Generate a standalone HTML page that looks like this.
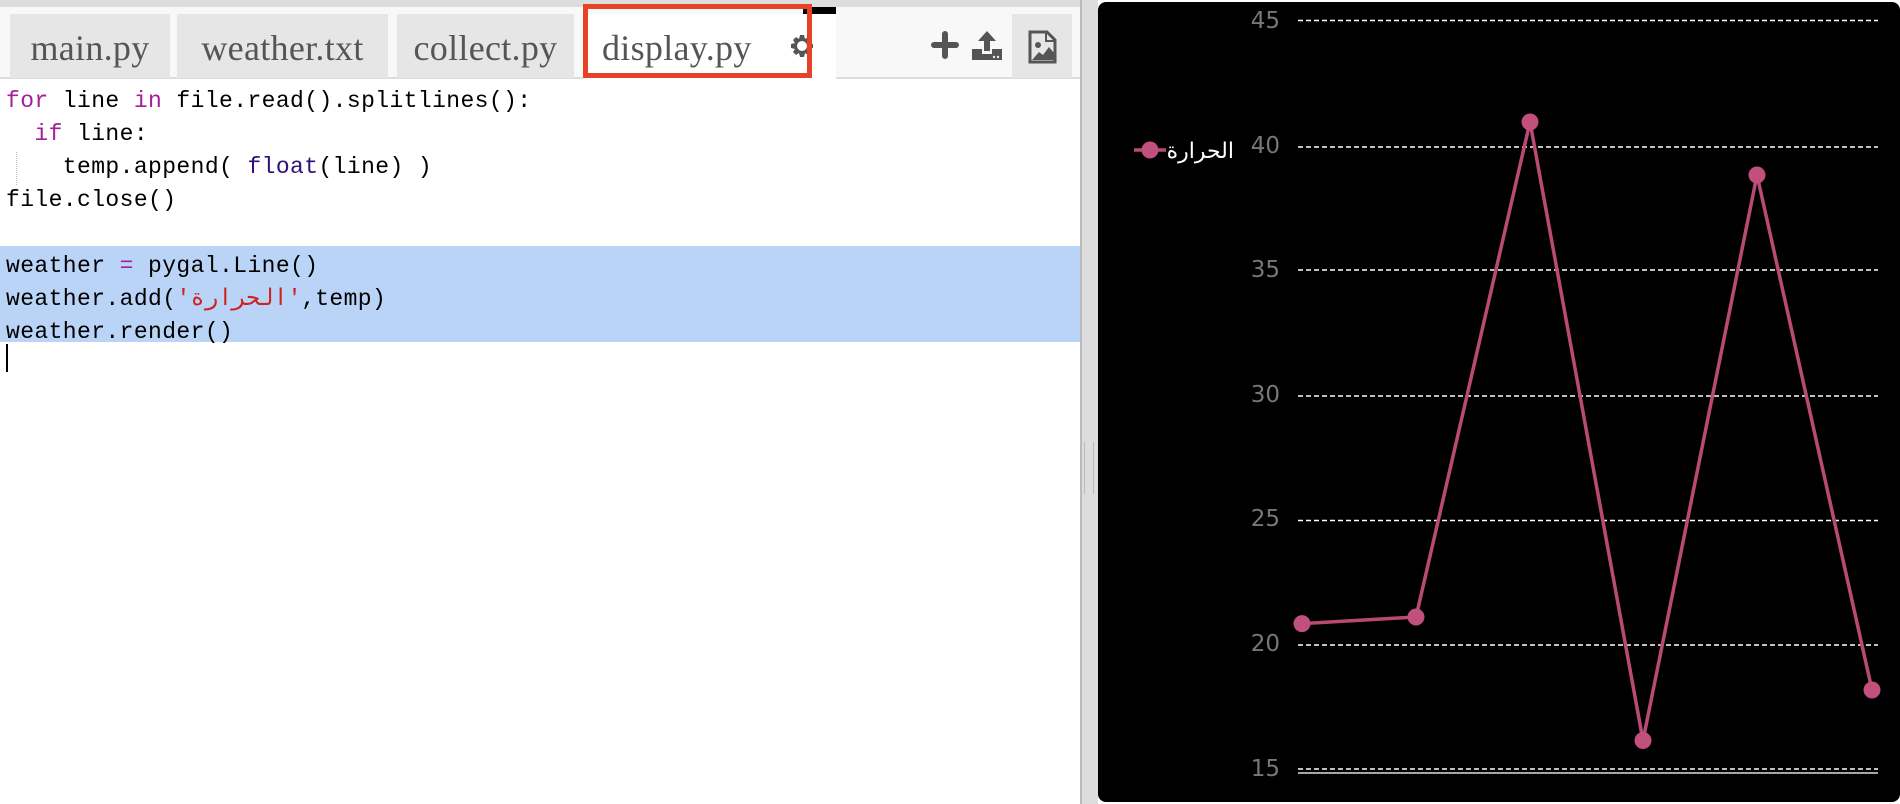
<!DOCTYPE html>
<html><head><meta charset="utf-8"><style>
body{margin:0;width:1900px;height:804px;overflow:hidden;background:#fff;position:relative;font-family:"Liberation Sans",sans-serif}
.abs{position:absolute}
.tab{position:absolute;top:14px;height:64px;background:#e6e6e6;font-family:"Liberation Serif",serif;font-size:36px;color:#555;line-height:68px;text-align:center;white-space:nowrap;letter-spacing:0.3px}
.code{position:absolute;left:6px;font-family:"Liberation Mono","Noto Sans CJK SC",monospace;font-size:23px;letter-spacing:0.4px;color:#000;white-space:pre;line-height:33px}
.k{color:#a31f9c}.b{color:#30107a}.s{color:#c22}
.lab{position:absolute;left:1220px;width:60px;text-align:right;font-family:"DejaVu Sans",sans-serif;font-size:23px;color:#777}
</style></head><body>
<div class="abs" style="left:0;top:0;width:1080px;height:7px;background:#ddd"></div>
<div class="abs" style="left:0;top:7px;width:1080px;height:71px;background:#f8f8f8"></div>
<div class="abs" style="left:0;top:77px;width:1080px;height:2px;background:#ddd"></div>
<div class="tab" style="left:10px;width:160px">main.py</div>
<div class="tab" style="left:177px;width:211px">weather.txt</div>
<div class="tab" style="left:397px;width:177px">collect.py</div>
<div class="abs" style="left:803px;top:7px;width:33px;height:8px;background:#000"></div>
<div class="abs" style="left:583px;top:14px;width:253px;height:66px;background:#fff"></div>
<div class="tab" style="left:602px;width:180px;background:#fff;text-align:left">display.py</div>
<svg class="abs" style="left:790px;top:32px" width="24" height="28" viewBox="0 0 24 24"><path fill="#555" d="M12 7a5 5 0 1 0 0 10a5 5 0 1 0 0-10zM10 1h4l1 4l3-2l3 3l-2 3l4 1v4l-4 1l2 3l-3 3l-3-2l-1 4h-4l-1-4l-3 2l-3-3l2-3l-4-1v-4l4-1l-2-3l3-3l3 2z"/></svg>
<div class="abs" style="left:583px;top:4px;width:229px;height:74px;border:5px solid #e8412a;box-sizing:border-box"></div>
<svg class="abs" style="left:930px;top:30px" width="30" height="30"><path d="M15 4v22M4 15h22" stroke="#555" stroke-width="6" stroke-linecap="round"/></svg>
<svg class="abs" style="left:970px;top:30px" width="34" height="32"><path fill="#555" d="M17 1l9 10h-6v10h-6v-10h-6z"/><path fill="#555" d="M2 19h10v5h10v-5h10v11h-30z"/><circle cx="24" cy="27" r="1.2" fill="#eee"/><circle cx="28" cy="27" r="1.2" fill="#eee"/></svg>
<div class="abs" style="left:1012px;top:14px;width:60px;height:64px;background:#e6e6e6"></div>
<svg class="abs" style="left:1028px;top:30px" width="30" height="34"><path d="M2 2h17l8 8v22h-25z" fill="none" stroke="#555" stroke-width="3"/><path d="M18 2v9h9" fill="none" stroke="#555" stroke-width="2"/><circle cx="10" cy="15" r="3" fill="#555"/><path d="M4 30l7-8l4 3l6-8l5 6v7z" fill="#555"/></svg>
<div class="abs" style="left:0;top:246px;width:1080px;height:96px;background:#bad4f8"></div>
<div class="abs" style="left:16px;top:152px;width:0;height:33px;border-left:1px dotted #bbb"></div>
<div class="code" style="top:85px"><span class="k">for</span> line <span class="k">in</span> file.read().splitlines():
  <span class="k">if</span> line:
    temp.append( <span class="b">float</span>(line) )
file.close()

weather <span class="k">=</span> pygal.Line()
weather.add(<span class="s">'الحرارة'</span>,temp)
weather.render()</div>
<div class="abs" style="left:6px;top:344px;width:2px;height:28px;background:#000"></div>
<div class="abs" style="left:1080px;top:0;width:18px;height:804px;background:#ddd;border-left:2px solid #bbb;box-sizing:border-box"></div>
<div class="abs" style="left:1084px;top:442px;width:8px;height:52px;border-left:1px solid #bbb;border-right:1px solid #bbb"></div>
<div class="abs" style="left:1098px;top:2px;width:802px;height:800px;background:#000;border-radius:8px"></div>
<div class="lab" style="top:8px">45</div><div class="lab" style="top:133px">40</div><div class="lab" style="top:257px">35</div><div class="lab" style="top:382px">30</div><div class="lab" style="top:506px">25</div><div class="lab" style="top:631px">20</div><div class="lab" style="top:756px">15</div>
<svg class="abs" style="left:0;top:0" width="1900" height="804">
<g stroke="#fff" stroke-width="1.5" stroke-dasharray="5,3">
<line x1="1298" x2="1878" y1="20.5" y2="20.5"/><line x1="1298" x2="1878" y1="147" y2="147"/><line x1="1298" x2="1878" y1="270" y2="270"/><line x1="1298" x2="1878" y1="396" y2="396"/><line x1="1298" x2="1878" y1="520.5" y2="520.5"/><line x1="1298" x2="1878" y1="645" y2="645"/><line x1="1298" x2="1878" y1="769" y2="769"/></g>
<line x1="1298" x2="1878" y1="773" y2="773" stroke="#ddd" stroke-width="1.5"/>
<polyline points="1302,623.6 1416,617 1530,122 1643,740.5 1757,175 1872,690" fill="none" stroke="#b94a73" stroke-width="3.5"/>
<g fill="#c2507c"><circle cx="1302" cy="623.6" r="8.5"/><circle cx="1416" cy="617" r="8.5"/><circle cx="1530" cy="122" r="8.5"/><circle cx="1643" cy="740.5" r="8.5"/><circle cx="1757" cy="175" r="8.5"/><circle cx="1872" cy="690" r="8.5"/>
<line x1="1134" x2="1166" y1="150" y2="150" stroke="#b94a73" stroke-width="3.5"/><circle cx="1150" cy="150" r="8.5"/></g>
<text x="1234" y="158" text-anchor="end" fill="#fff" font-size="22" font-family="DejaVu Sans,sans-serif">الحرارة</text>
</svg>
</body></html>
